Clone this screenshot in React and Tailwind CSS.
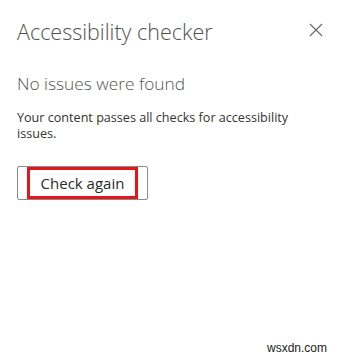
import React from "react";

function CloseIcon() {
  return (
    <svg width="14" height="14" viewBox="0 0 14 14" className="text-[#6b6b6b]">
      <path d="M1 1L13 13M13 1L1 13" stroke="currentColor" strokeWidth="1.2" fill="none" />
    </svg>
  );
}

export default function App() {
  return (
    <div className="relative w-[339px] h-[361px] bg-white font-['Open_Sans',sans-serif] overflow-hidden">
      <div className="flex items-start justify-between pl-[17px] pr-[16px] pt-[18px]">
        <h1 className="text-[21.5px] font-light text-[#505050] leading-[28px]">Accessibility checker</h1>
        <button className="mt-[5px]">
          <CloseIcon />
        </button>
      </div>

      <div className="px-[17px] pt-[27px]">
        <h2 className="text-[17.3px] font-light text-[#555] leading-[22px]">No issues were found</h2>
        <p className="mt-[15px] text-[12.6px] text-[#333] leading-[16px] w-[295px]">
          Your content passes all checks for accessibility issues.
        </p>
        <div className="mt-[24px] w-[131px] h-[34px] border border-[#8a8a8a] rounded-[2px] flex items-center justify-center">
          <div className="w-[111px] h-[32px] border-[3px] border-[#e3161c] flex items-center justify-center">
            <span className="text-[15px] text-[#2b2b2b] leading-none">Check again</span>
          </div>
        </div>
      </div>

      <div className="absolute right-[12px] bottom-[4px] text-[12px] text-[#222] font-['Liberation_Sans',sans-serif]">
        wsxdn.com
      </div>
    </div>
  );
}
